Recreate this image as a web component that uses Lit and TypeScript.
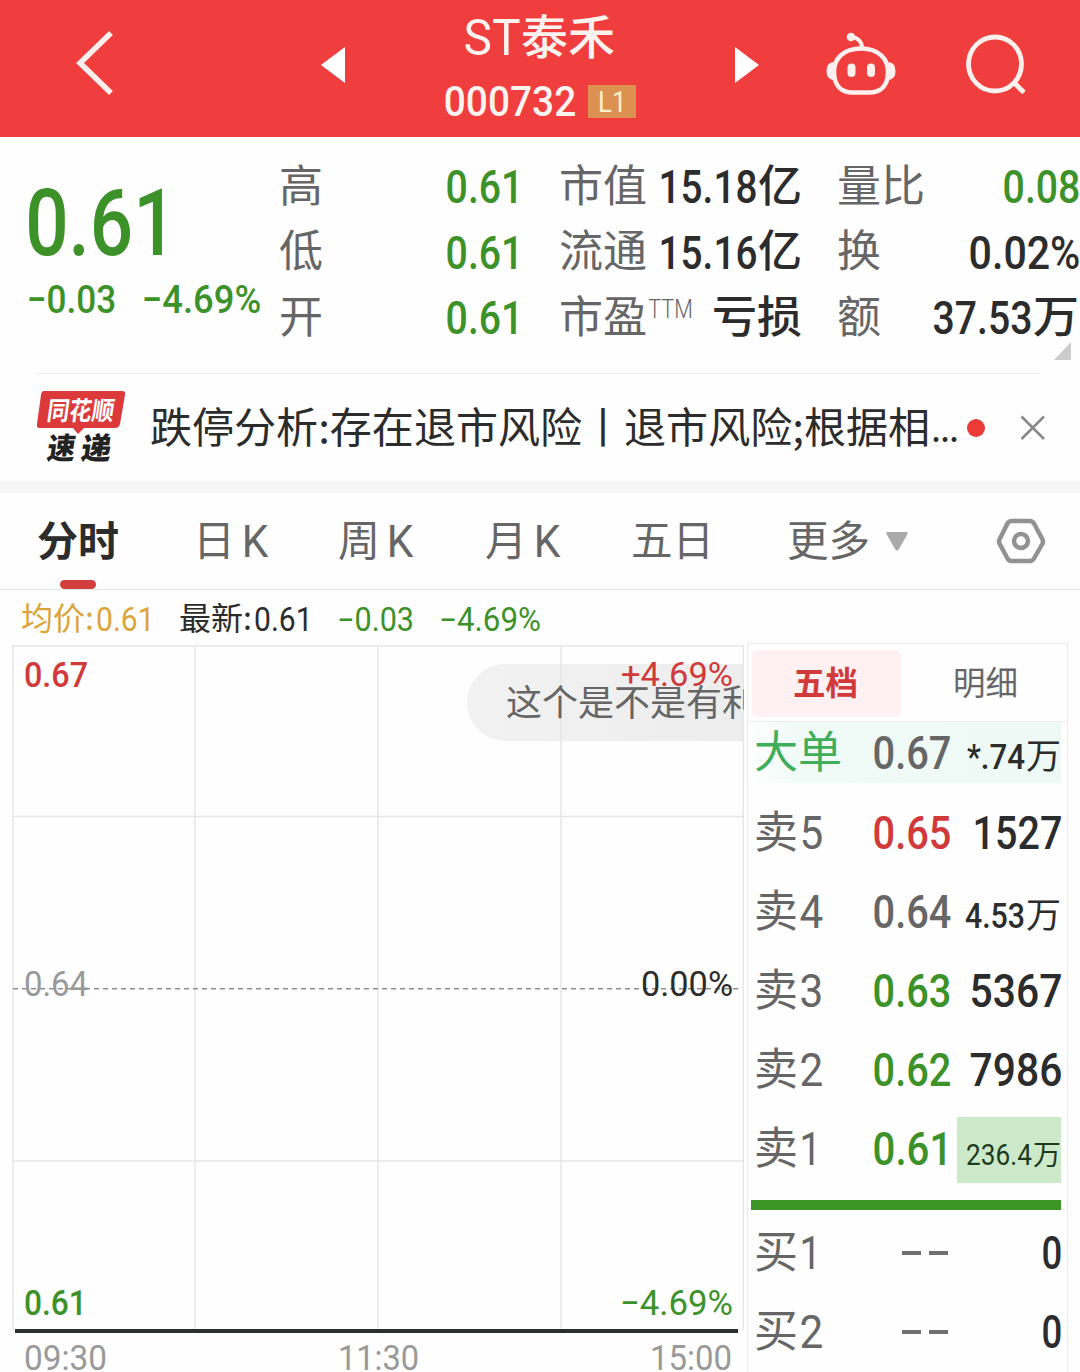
import { LitElement, html, css } from "lit";
import { customElement } from "lit/decorators.js";

/** Number whose box equals its inked digits: w wide, cap tall. */
const num = (text: string, w: number, cap: number, cls = "") => {
  const em = cap / 0.711;
  const tail = text.endsWith("1") ? 0.05 : 0.03;
  const lead = 0.03;
  return html`<svg class="t num ${cls}" width=${w} height=${cap}>
    <text x=${-lead * em} y=${cap} font-size=${em} textLength=${w + (lead + tail) * em} lengthAdjust="spacingAndGlyphs">${text}</text>
  </svg>`;
};

/** Chinese text whose box is w wide and one em tall. */
const han = (text: string, w: number, em: number, cls = "") => html`<svg class="t han ${cls}" width=${w} height=${em}>
    <text x="0" y=${em * 0.85} font-size=${em} textLength=${w} lengthAdjust="spacingAndGlyphs">${text}</text>
  </svg>`;

const textStyles = css`
  .t { display: block; overflow: visible; flex: none; fill: currentColor; }
  .num { font-family: Roboto, "Liberation Sans", sans-serif; font-weight: 500; }
  .han { font-family: "Noto Sans CJK SC", sans-serif; font-weight: 400; }
  .reg { font-weight: 400; }
  .light { font-weight: 300; }
  .med { font-weight: 500; }
  .bold { font-weight: 700; }
  .g { color: #3c9229; }
  .r { color: #d03a3a; }
  .k { color: #2c2c2c; }
  .s { color: #666; }
  .a { color: #999; }
  .o { color: #dba53c; }
  .row { display: flex; align-items: center; }
`;

@customElement("stock-header")
class StockHeader extends LitElement {
  static styles = [textStyles, css`
    :host { display: flex; height: 137px; box-sizing: border-box; background: #f03d3d; color: #fff3f0; padding-left: 75px; align-items: flex-start; }
    svg { display: block; flex: none; }
    .back { margin-top: 29px; }
    .prev { margin: 47px 0 0 206px; }
    .title { width: 192px; margin: 14px 0 0 100px; }
    .name { height: 47px; gap: 2px; padding-left: 20px; }
    .code { height: 34px; margin-top: 23px; gap: 13px; }
    .badge { width: 48px; height: 33px; background: #dc9051; justify-content: center; color: #fff1c8; }
    .next { margin: 47px 0 0 98px; }
    .robot { margin: 30px 0 0 67px; }
    .search { margin: 33px 0 0 69px; }
  `];
  render() {
    return html`
      <svg class="back" width="40" height="68" fill="none" stroke="#fff0ed" stroke-width="5.5"><path d="M36 4 5 34 36 64"/></svg>
      <svg class="prev" width="24" height="36"><path d="M24 0V36L0 18z" fill="#fff"/></svg>
      <div class="title">
        <div class="row name">${num("ST", 54, 35, "reg")}${han("泰禾", 94, 47, "med")}</div>
        <div class="row code">${num("000732", 130, 30, "")}<div class="row badge">${num("L1", 26, 21, "reg")}</div></div>
      </div>
      <svg class="next" width="24" height="36"><path d="M0 0V36L24 18z" fill="#fff"/></svg>
      <svg class="robot" width="70" height="68" fill="none" stroke="#fff0ed" stroke-width="4.600">
        <path d="M35 18.500C53 18.500 62 29 62 42C62 56 54 62.500 43 62.500H27C16 62.500 8 56 8 42C8 29 17 18.500 35 18.500Z"/>
        <path d="M36 18C36 11 31 7.500 25 7" stroke-width="4"/>
        <circle cx="25" cy="7" r="4.300" fill="#fff0ed" stroke="none"/>
        <path d="M7 32Q.5 33 .5 41T7 50ZM63 32Q69.500 33 69.500 41T63 50Z" fill="#fff0ed" stroke="none"/>
        <path d="M25.500 37.500V43M45 37.500V43" stroke-width="8" stroke-linecap="round"/>
      </svg>
      <svg class="search" width="64" height="64" fill="none" stroke="#fff0ed" stroke-width="4.800">
        <ellipse cx="30" cy="31" rx="26.500" ry="27"/><path d="M48.500 49 59 59.500"/>
      </svg>`;
  }
}

@customElement("quote-summary")
class QuoteSummary extends LitElement {
  static styles = [textStyles, css`
    :host { display: block; height: 237px; }
    .body { display: flex; height: 236px; }
    .price { width: 279px; box-sizing: border-box; padding: 52px 0 0 28px; }
    .chg { margin-top: 30px; gap: 28px; }
    .col { display: flex; flex-direction: column; padding-top: 17px; }
    .c1 { width: 242px; margin-right: 38px; }
    .c2 { width: 243px; margin-right: 35px; }
    .c3 { width: 242px; position: relative; }
    .cell { height: 65.5px; justify-content: space-between; }
    .sup { align-items: flex-start; gap: 2px; }
    .sup .num { margin-top: 4px; }
    .v { gap: 2px; }
    .corner { position: absolute; left: 217px; top: 205px; }
    .rule { height: 1px; margin: 0 40px 0 37px; background: #ececec; }
  `];
  render() {
    const cell = (l: unknown, v: unknown) => html`<div class="row cell">${l}${v}</div>`;
    const yi = (n: string) => html`<div class="row v k">${num(n, 96, 33)}${han("亿", 44, 44, "med")}</div>`;
    const lab = (t: string) => han(t, t.length * 44, 44, "s");
    return html`<div class="body">
      <div class="price g">
        ${num("0.61", 144, 66, "")}
        <div class="row chg">${num("−0.03", 87, 28)}${num("−4.69%", 117, 28)}</div>
      </div>
      <div class="col c1">${["高", "低", "开"].map((l) => cell(lab(l), num("0.61", 74, 33, "g")))}</div>
      <div class="col c2">
        ${cell(lab("市值"), yi("15.18"))}
        ${cell(lab("流通"), yi("15.16"))}
        ${cell(html`<div class="row sup s">${lab("市盈")}${num("TTM", 43, 18, "light")}</div>`, han("亏损", 90, 44, "k med"))}
      </div>
      <div class="col c3">
        ${cell(lab("量比"), num("0.08", 75, 33, "g"))}
        ${cell(lab("换"), num("0.02%", 109, 33, "k"))}
        ${cell(lab("额"), html`<div class="row v k">${num("37.53", 97, 33)}${han("万", 46, 44, "med")}</div>`)}
        <svg class="corner" width="17" height="18"><path d="M17 0V18H0z" fill="#ccc"/></svg>
      </div>
    </div><div class="rule"></div>`;
  }
}

@customElement("news-strip")
class NewsStrip extends LitElement {
  static styles = [textStyles, css`
    :host { display: flex; align-items: center; height: 107px; border-bottom: 12px solid #f5f5f5; padding-left: 36px; }
    .logo { display: block; margin-right: 24px; overflow: visible; }
    .lt { font-family: "Noto Sans CJK SC", sans-serif; font-weight: 900; }
    .dot { width: 18px; height: 18px; border-radius: 50%; background: #eb3b37; margin-left: 10px; }
    .x { margin-left: 35px; }
    .more { margin-left: 3px; }
  `];
  render() {
    return html`
      <svg class="logo" width="90" height="76">
        <path d="M8 1H86Q90 1 89 5L84 34Q83 38 79 38H48L42 44 37 38H4Q0 38 1 34L5 5Q5.500 1 8 1Z" fill="#dc393b"/>
        <g class="lt" stroke-width=".6">
          <text transform="translate(10 29.500) skewX(-8)" font-size="26" textLength="67" lengthAdjust="spacingAndGlyphs" fill="#fff" font-weight="700">同花顺</text>
          <text transform="translate(10 69) skewX(-8)" font-size="30" textLength="28" lengthAdjust="spacingAndGlyphs" fill="#222">速</text>
          <text transform="translate(44 69) skewX(-8)" font-size="30" textLength="30" fill="#222">递</text>
        </g>
      </svg>
      ${han("跌停分析:存在退市风险丨退市风险;根据相", 780, 42, "k")}
      <svg class="more t han k" width="24" height="42"><text x="-2" y="35" font-size="36" textLength="28">...</text></svg>
      <div class="dot"></div>
      <svg class="x" width="26" height="26" stroke="#888" stroke-width="2.500"><path d="M1.500 1.500 24 24M24 1.500 1.500 24"/></svg>`;
  }
}

@customElement("period-tabs")
class PeriodTabs extends LitElement {
  static styles = [textStyles, css`
    :host { display: flex; height: 96px; border-bottom: 1px solid #e4e4e4; padding-left: 37px; color: #666; }
    .tab { display: flex; align-items: center; position: relative; }
    .w1 { margin-left: 74px; } .w2 { margin-left: 71px; } .w3 { margin-left: 73px; }
    .w4 { margin-left: 72px; } .w5 { margin-left: 73px; gap: 16px; }
    .k2 { gap: 8px; }
    .mark { position: absolute; left: 23px; bottom: 0; width: 36px; height: 9px; border-radius: 5px; background: #d23e3c; }
    .gear { margin: 25px 0 0 88px; }
  `];
  render() {
    const k = (t: string, c: string) => html`<div class="tab k2 ${c}">${han(t, 42, 42)}${num("K", 24, 31, "reg")}</div>`;
    return html`
      <div class="tab k">${han("分时", 82, 41, "bold")}<div class="mark"></div></div>
      ${k("日", "w1")}${k("周", "w2")}${k("月", "w3")}
      <div class="tab w4">${han("五日", 83, 42)}</div>
      <div class="tab w5">${han("更多", 83, 42)}<svg width="22" height="19"><path d="M2 0H20Q23 0 21 3L13 17Q11 20 9 17L1 3Q-1 0 2 0Z" fill="#aaa"/></svg></div>
      <svg class="gear" width="50" height="48" fill="none" stroke="#929292" stroke-linejoin="round">
        <path d="M15.500 3H34Q36.500 3 38 5.500L46 20.500Q48 23.500 46 26.500L38 40.500Q36.500 43 34 43H15.500Q13 43 11.500 40.500L4 26.500Q2 23.500 4 20.500L11.500 5.500Q13 3 15.500 3Z" stroke-width="4.500"/>
        <circle cx="25" cy="23" r="7" stroke-width="4.500"/>
      </svg>`;
  }
}

@customElement("minute-chart")
class MinuteChart extends LitElement {
  static styles = [textStyles, css`
    :host { display: block; width: 744px; }
    .info { height: 58px; padding-left: 21px; box-sizing: border-box; }
    .i2 { margin-left: 26px; } .i3 { margin-left: 27px; } .i4 { margin-left: 27px; }
    .info .row { gap: 3px; }
    .plot { position: relative; height: 685px; margin-left: 12px; margin-top: -3px; overflow: hidden; }
    .grid { position: absolute; inset: 0; display: block; }
    .labels { position: absolute; inset: 0; padding: 16px 12px 15px 13px; display: flex; flex-direction: column; justify-content: space-between; }
    .line { display: flex; justify-content: space-between; align-items: center; height: 26px; }
    .line.mid { align-items: flex-start; height: 34px; }
    .pill { position: absolute; left: 455px; top: 19px; width: 290px; height: 77px; box-sizing: border-box; padding-left: 39px; border-radius: 38px 0 0 38px; }
    .fill { background: linear-gradient(90deg, #f2f2f2, #ededed); }
    .axis { height: 4px; margin: -1px 6px 0 15px; background: #2e3030; position: relative; }
    .times { display: flex; justify-content: space-between; padding: 12px 13px 0 25px; }
  `];
  render() {
    return html`
      <div class="row info">
        <div class="row o">${han("均价:", 73, 32)}${num("0.61", 56, 23, "reg")}</div>
        <div class="row i2 k">${han("最新:", 73, 32)}${num("0.61", 56, 23, "reg")}</div>
        <div class="i3 g">${num("−0.03", 75, 23, "reg")}</div>
        <div class="i4 g">${num("−4.69%", 100, 23, "reg")}</div>
      </div>
      <div class="plot">
        <div class="pill fill"></div>
        <svg class="grid" width="732" height="685" fill="none" stroke="#e6e6e6" stroke-width="1.500">
          <path d="M1 0V685M183 0V685M366 0V685M549 0V685M731.300 0V685M0 1H732M0 171.500H732M0 516H732"/>
          <path d="M1 343.800H726" stroke="#8e8e8e" stroke-dasharray="5 4"/>
        </svg>
        <div class="labels">
          <div class="line">${num("0.67", 62, 25, "r")}${num("+4.69%", 110, 24, "r reg")}</div>
          <div class="line mid">${num("0.64", 62, 25, "a reg")}${num("0.00%", 90, 25, "k reg")}</div>
          <div class="line g">${num("0.61", 60, 25)}${num("−4.69%", 111, 25, "reg")}</div>
        </div>
        <div class="row pill s">${han("这个是不是有利", 252, 36)}</div>
      </div>
      <div class="axis"></div>
      <div class="times a">${num("09:30", 81, 25, "reg")}${num("11:30", 79, 25, "reg")}${num("15:00", 80, 25, "reg")}</div>`;
  }
}

interface Level { side: string; n: string; price: string; tone: string; vol: string; w: number; cap: number; wan?: number; hot?: boolean; }

@customElement("order-book")
class OrderBook extends LitElement {
  static styles = [textStyles, css`
    :host { display: block; box-sizing: border-box; width: 321px; margin: 53px 0 0 3px; height: 729px; border: 1.500px solid #ebebeb; border-bottom: 0; overflow: hidden; }
    .tabs { display: flex; height: 78px; border-bottom: 1px solid #ececec; padding: 6px 0 0 4px; box-sizing: border-box; }
    .tab { display: flex; width: 149px; height: 67px; align-items: center; justify-content: center; }
    .on { background: #fff0f1; border-radius: 6px; }
    .off { margin-left: 10px; }
    .on .t { margin-left: -3px; }
    .level { height: 79.100px; padding-left: 6px; width: 313px; box-sizing: border-box; }
    .first { height: 61px; margin-bottom: 10px; background: linear-gradient(90deg, #fff 0, #f0faf6 15%, #eef9f5); }
    .first .side { color: #3fae5b; }
    .side { width: 120px; gap: 3px; }
    .price { width: 76px; justify-content: flex-end; }
    .vol { flex: 1; justify-content: flex-end; align-self: stretch; gap: 2px; }
    .small { padding-top: 7px; }
    .hot .vol { background: #cce9ca; flex: none; width: 104px; height: 66px; align-self: center; margin: 2px 0 0 7px; box-sizing: border-box; color: #1d3b1c; padding-top: 10px; }
    .bar { height: 10px; width: 310px; margin: 12px 0 2.500px 3px; background: #3d9427; }
    .dash { gap: 8px; margin-right: 2px; }
    .dash i { width: 19px; height: 4px; background: #707070; }
  `];
  private sells: Level[] = [
    { side: "卖", n: "5", price: "0.65", tone: "r", vol: "1527", w: 87, cap: 33 },
    { side: "卖", n: "4", price: "0.64", tone: "s", vol: "4.53", w: 58, cap: 25, wan: 35 },
    { side: "卖", n: "3", price: "0.63", tone: "g", vol: "5367", w: 90, cap: 33 },
    { side: "卖", n: "2", price: "0.62", tone: "g", vol: "7986", w: 90, cap: 33 },
    { side: "卖", n: "1", price: "0.61", tone: "g", vol: "236.4", w: 64, cap: 21, wan: 28, hot: true },
  ];
  private level(l: Level) {
    return html`<div class="row level ${l.hot ? "hot" : ""}">
      <div class="row side s">${han(l.side, 44, 44)}${num(l.n, l.n === "1" ? 18 : 21, 33, "reg")}</div>
      <div class="row price ${l.tone}">${l.price ? num(l.price, 76, 33) : html`<div class="row dash"><i></i><i></i></div>`}</div>
      <div class="row vol k ${l.wan ? "small" : ""}">${num(l.vol, l.w, l.cap, l.hot ? "reg" : "")}${l.wan ? han("万", l.wan, l.wan) : ""}</div>
    </div>`;
  }
  render() {
    return html`
      <div class="tabs"><div class="tab on r">${han("五档", 65, 33, "bold")}</div><div class="tab off s">${han("明细", 65, 33)}</div></div>
      <div class="row level first">
        <div class="row side">${han("大单", 88, 44)}</div>
        <div class="row price s">${num("0.67", 76, 33)}</div>
        <div class="row vol k small">${num("*.74", 56, 25)}${han("万", 35, 35)}</div>
      </div>
      ${this.sells.map((l) => this.level(l))}
      <div class="bar"></div>
      ${["1", "2"].map((n) => this.level({ side: "买", n, price: "", tone: "s", vol: "0", w: 18, cap: 33 }))}`;
  }
}

@customElement("app-root")
class AppRoot extends LitElement {
  static styles = css`
    :host { display: block; width: 1080px; height: 1372px; overflow: hidden; background: #fefefe; }
    .main { display: flex; align-items: flex-start; }
  `;
  render() {
    return html`<stock-header></stock-header><quote-summary></quote-summary><news-strip></news-strip><period-tabs></period-tabs>
      <div class="main"><minute-chart></minute-chart><order-book></order-book></div>`;
  }
}
